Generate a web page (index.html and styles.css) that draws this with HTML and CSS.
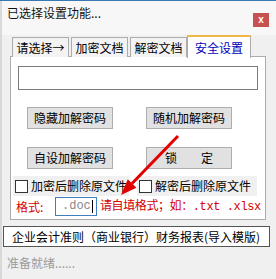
FILE: index.html
```html
<!DOCTYPE html>
<html lang="zh-CN">
<head>
	<meta charset="UTF-8">
	<title>已选择设置功能...</title>
	<link rel="stylesheet" href="styles.css">
</head>
<body>
	<div id="win">
		<div class="titlebar">
			<span class="title">已选择设置功能...</span>
			<span class="close">x</span>
		</div>
		<div class="tabs">
			<span class="tab">请选择→</span>
			<span class="tab">加密文档</span>
			<span class="tab">解密文档</span>
			<span class="tab active">安全设置</span>
		</div>
		<div class="panel">
			<input type="text" class="pwd">
			<div class="btns">
				<a class="btn" href="#">隐藏加解密码</a>
				<a class="btn" href="#">随机加解密码</a>
				<a class="btn" href="#">自设加解密码</a>
				<a class="btn btn-lock" href="#">锁　　定</a>
			</div>
			<div class="checks">
				<label class="chk"><i></i>加密后删除原文件</label>
				<label class="chk chk-2"><i></i>解密后删除原文件</label>
			</div>
			<div class="fmt">
				<span class="fmt-label">格式:</span>
				<span class="fmt-input">.doc<b></b></span>
				<span class="fmt-tip">请自填格式；如：.txt .xlsx</span>
			</div>
		</div>
		<div class="combo">企业会计准则（商业银行）财务报表(导入模版)</div>
		<div class="status">准备就绪......</div>
		<svg class="arrow" width="276" height="279" viewBox="0 0 276 279">
			<line x1="178" y1="135" x2="132" y2="182.5" stroke="#e30000" stroke-width="3"/>
			<polygon points="121,194 136.4,186.7 127.8,178.3" fill="#e30000"/>
		</svg>
	</div>
</body>
</html>
```

FILE: styles.css
```css
body,div,p,input{margin: 0;padding: 0}
a{color:#000;outline: none;text-decoration: none;}
body{font: 400 12px/16px "Noto Sans CJK SC","Liberation Sans",sans-serif;background: #f0f0f0;}
#win{position: relative;width: 276px;height: 279px;overflow: hidden;background: #f0f0f0;border-top: 1px solid #3a78b5;box-sizing: border-box;}
#win:before{content: "";position: absolute;left: 0;top: 0;bottom: 0;width: 2px;background: #d9d9d9;}

.titlebar{display: flex;justify-content: space-between;align-items: flex-start;height: 34px;background: #f7f7f7;}
.title{padding: 4px 0 0 7px;color: #111;}
.close{margin: 12px 7px 0 0;width: 16px;height: 14px;background: #c75050;color: #fff;font: 700 10px/13px "Liberation Sans",sans-serif;text-align: center;}

.tabs{display: flex;align-items: flex-end;height: 22px;padding-left: 12px;position: relative;z-index: 1;margin-bottom: -1px;}
.tab{width: 57px;height: 20px;box-sizing: border-box;margin-right: 2px;border: 1px solid #acacac;border-bottom: 0;background: #f3f3f3;text-align: center;line-height: 19px;color: #000;}
.tab.active{width: 64px;height: 23px;margin: 0 0 -1px -2px;background: #fff;border-top: 2px solid #f0b847;color: #0000b8;line-height: 21px;}

.panel{margin: 0 10px;height: 164px;border: 1px solid #acacac;background: #fff;box-sizing: border-box;}
.pwd{display: block;margin: 9px 0 0 7px;width: 240px;height: 24px;border: 1px solid #7a7a7a;box-sizing: border-box;background: #fff;}
.btns{display: grid;grid-template-columns: 86px 86px;column-gap: 33px;row-gap: 18px;margin: 17px 0 0 16px;}
.btn{display: block;height: 22px;line-height: 20px;border: 1px solid #adadad;box-sizing: border-box;background: #e1e1e1;text-align: center;}

.checks{display: flex;margin: 7px 0 0 2px;height: 20px;}
.chk{display: flex;align-items: center;gap: 3px;width: 116px;background: #f0f0f0;}
.chk i{display: inline-block;width: 11px;height: 11px;margin-left: 2px;border: 1px solid #333;background: #fff;}
.chk-2{width: 120px;margin-left: 8px;}

.fmt{display: flex;align-items: center;margin: 1px 0 0 5px;color: #d40000;}
.fmt-label{width: 39px;}
.fmt-input{display: flex;align-items: center;width: 42px;height: 19px;box-sizing: border-box;padding-left: 6px;margin-right: 3px;border: 1px solid #3f7fc0;color: #888;font: 400 12px/17px "Liberation Mono",monospace;}
.fmt-input b{display: inline-block;width: 1px;height: 13px;background: #000;margin-left: 1px;}
.fmt-tip{white-space: nowrap;font-family: "Liberation Mono","Noto Sans CJK SC",monospace;letter-spacing: -0.4px;}

.combo{margin: 6px 6px 0 3px;height: 21px;border: 1px solid #555;box-sizing: border-box;background: #fff;padding-left: 8px;line-height: 19px;}
.status{padding: 8px 0 0 7px;color: #9a9a9a;}

.arrow{position: absolute;left: 0;top: 0;pointer-events: none;}
```
